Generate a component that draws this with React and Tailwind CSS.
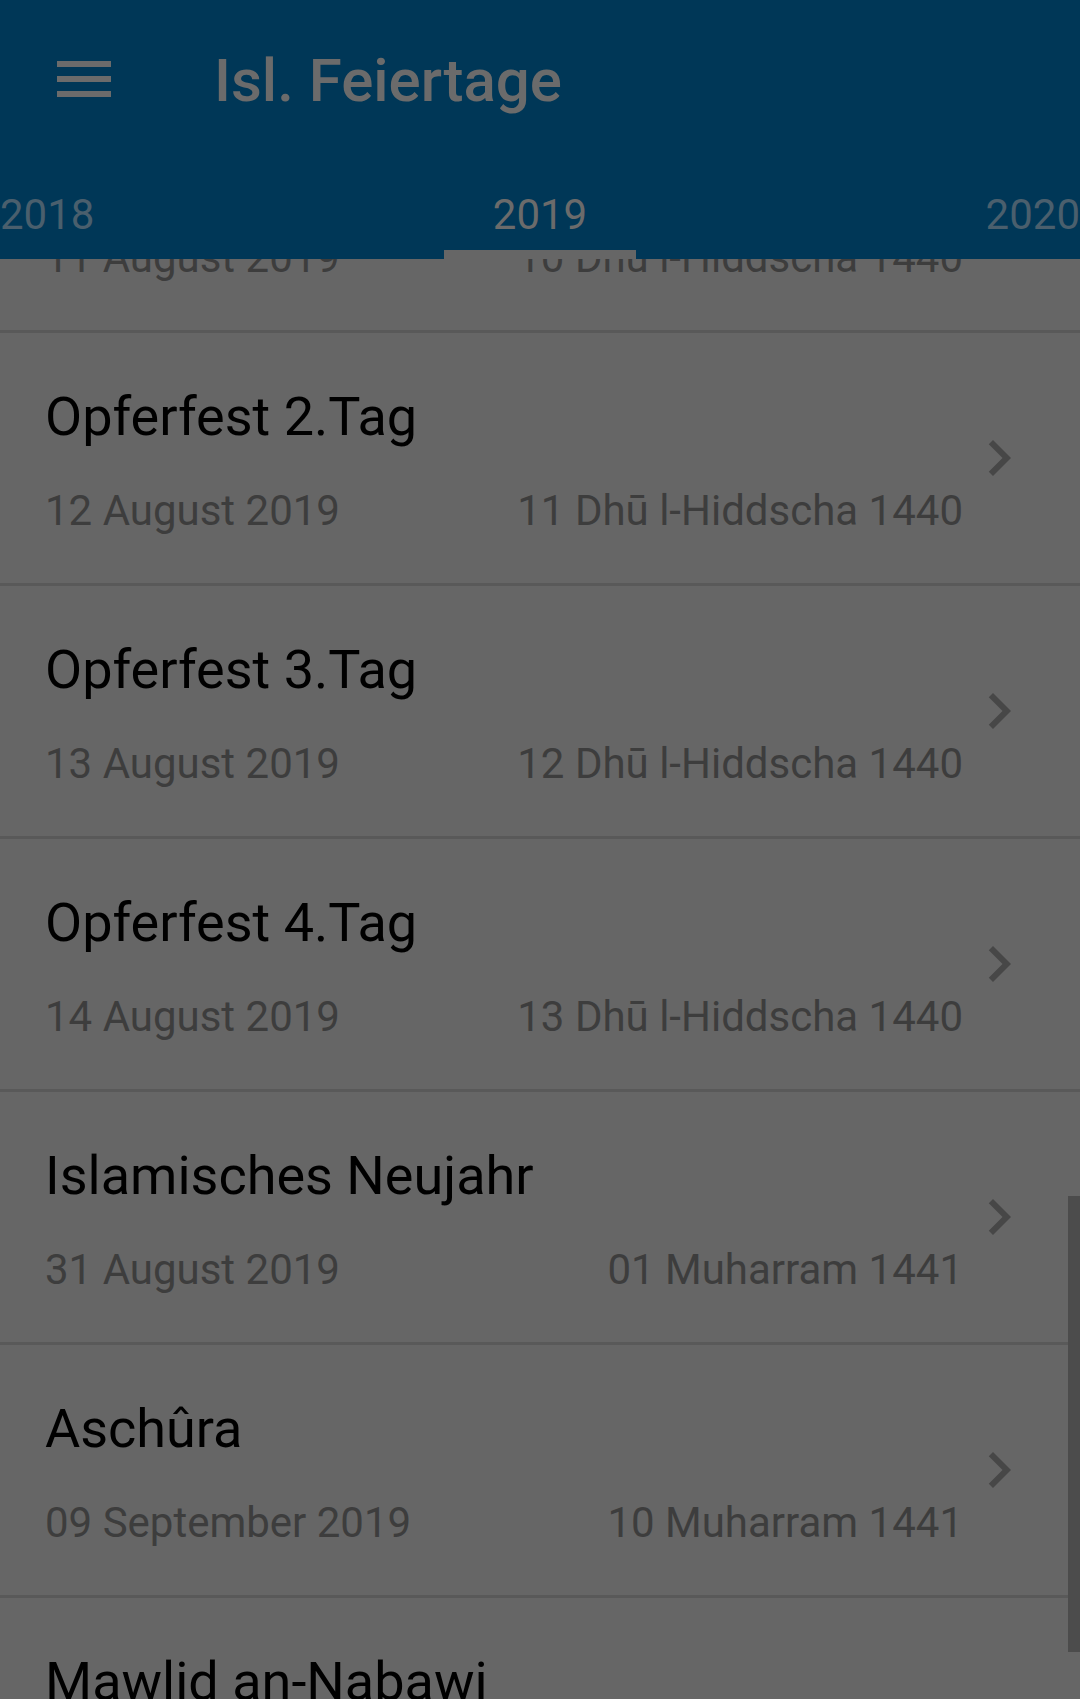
import React from "react";

const holidays = [
    { title: "Opferfest 1.Tag", date: "11 August 2019", hijri: "10 Dhū l-Hiddscha 1440" },
    { title: "Opferfest 2.Tag", date: "12 August 2019", hijri: "11 Dhū l-Hiddscha 1440" },
    { title: "Opferfest 3.Tag", date: "13 August 2019", hijri: "12 Dhū l-Hiddscha 1440" },
    { title: "Opferfest 4.Tag", date: "14 August 2019", hijri: "13 Dhū l-Hiddscha 1440" },
    { title: "Islamisches Neujahr", date: "31 August 2019", hijri: "01 Muharram 1441" },
    { title: "Aschûra", date: "09 September 2019", hijri: "10 Muharram 1441" },
    { title: "Mawlid an-Nabawi", date: "09 November 2019", hijri: "12 Rabi' al-awwal 1441" },
];

const Chevron = () => (
    <svg width="72" height="72" viewBox="0 0 24 24" className="shrink-0">
        <path d="M10 6L8.59 7.41 13.17 12l-4.58 4.59L10 18l6-6z" fill="#474747" />
    </svg>
);

const HolidayRow = ({ item }) => (
    <div className="h-[253px] flex items-center border-b-[3px] border-[#595959]">
        <div className="flex-1 h-full pl-[45px] pt-[52px]">
            <div className="text-[54px] leading-[64px] text-black">{item.title}</div>
            <div className="mt-[37px] flex justify-between text-[42px] leading-[50px] text-[#3d3d3d]">
                <span>{item.date}</span>
                <span>{item.hijri}</span>
            </div>
        </div>
        <Chevron />
        <div className="w-[45px] shrink-0" />
    </div>
);

export default function App() {
    return (
        <div className="relative w-[1080px] h-[1699px] overflow-hidden flex flex-col bg-[#666666] font-['Roboto',sans-serif]">
            {/* App bar */}
            <header className="shrink-0 bg-[#003757]">
                <div className="h-[168px] flex items-start">
                    <div className="w-[214px] pl-[57px] pt-[61px]">
                        <div className="w-[54px] h-[36px] flex flex-col justify-between">
                            <div className="h-[6px] bg-[#6b6b6b]" />
                            <div className="h-[6px] bg-[#6b6b6b]" />
                            <div className="h-[6px] bg-[#6b6b6b]" />
                        </div>
                    </div>
                    <h1 className="pt-[51px] text-[60px] leading-[60px] font-medium text-[#6b6b6b]">
                        Isl. Feiertage
                    </h1>
                </div>

                {/* Year tabs */}
                <div className="h-[91px] flex justify-between text-[42px] leading-[50px]">
                    <span className="pt-[22px] text-[#4a5f6d]">2018</span>
                    <div className="w-[192px] flex flex-col items-center">
                        <span className="pt-[22px] text-[#6b6b6b]">2019</span>
                        <div className="mt-auto w-full h-[9px] bg-[#666666]" />
                    </div>
                    <span className="pt-[22px] text-[#4a5f6d]">2020</span>
                </div>
            </header>

            {/* Holiday list, scrolled */}
            <div className="flex-1 overflow-hidden">
                <div className="-mt-[179px]">
                    {holidays.map((item, idx) => (
                        <HolidayRow key={idx} item={item} />
                    ))}
                </div>
            </div>

            {/* Scrollbar */}
            <div className="absolute right-0 top-[1196px] w-[12px] h-[456px] bg-[#4c4c4c]" />
        </div>
    );
}
